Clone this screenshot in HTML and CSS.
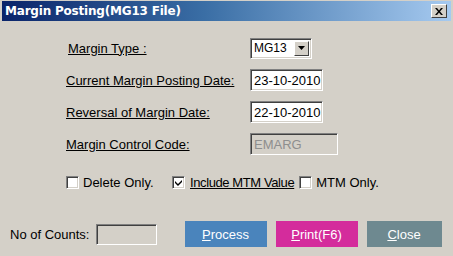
FILE: index.html
```html
<!DOCTYPE html>
<html lang="en">
<head>
    <meta charset="UTF-8">
    <title>Margin Posting(MG13 File)</title>
    <link rel="stylesheet" href="styles.css">
</head>
<body>
    <div class="window">
        <div class="titlebar">
            <span class="title">Margin Posting(MG13 File)</span>
            <div class="close-btn">
                <svg width="8" height="7" viewBox="0 0 8 7"><path d="M0 0h2l2 2.5L6 0h2L5 3.5 8 7H6L4 4.5 2 7H0l3-3.5z" fill="#000"/></svg>
            </div>
        </div>
        <div class="form">
            <label class="lbl lbl-first">Margin Type :</label>
            <div class="select">
                <span class="select-value">MG13</span>
                <span class="select-arrow">
                    <svg width="7" height="4" viewBox="0 0 7 4"><path d="M0 0h7L3.5 4z" fill="#000"/></svg>
                </span>
            </div>

            <label class="lbl">Current Margin Posting Date:</label>
            <div class="field date">23-10-2010</div>

            <label class="lbl">Reversal of Margin Date:</label>
            <div class="field date">22-10-2010</div>

            <label class="lbl">Margin Control Code:</label>
            <div class="field disabled">EMARG</div>
        </div>

        <div class="checks">
            <div class="check"><span class="box"></span><span>Delete Only.</span></div>
            <div class="check check-mtm"><span class="box">
                <svg width="7" height="7" viewBox="0 0 7 7"><path d="M0 2l3 3 4-4v2L3 7 0 4z" fill="#000"/></svg>
            </span><span class="u tight">Include MTM Value</span></div>
            <div class="check"><span class="box"></span><span>MTM Only.</span></div>
        </div>

        <div class="footer">
            <span class="count-lbl">No of Counts:</span>
            <div class="field count"></div>
            <div class="buttons">
                <div class="btn btn-process"><span class="u">P</span>rocess</div>
                <div class="btn btn-print"><span class="u">P</span>rint(F6)</div>
                <div class="btn btn-close"><span class="u">C</span>lose</div>
            </div>
        </div>
    </div>
</body>
</html>
```
FILE: styles.css
```css
:root {
    --face: #d4d0c8;
    --shadow: #808080;
    --dark: #404040;
    --text: #000000;
}
body {
    margin: 0;
    font-family: 'Liberation Sans', Arial, sans-serif;
    font-size: 13px;
    color: var(--text);
}
.window {
    width: 453px;
    height: 256px;
    background-color: var(--face);
    display: flex;
    flex-direction: column;
    overflow: hidden;
}
.titlebar {
    height: 20px;
    margin: 1px 2px 0 2px;
    background: linear-gradient(to right, #0a246a 0%, #3a6ea5 45%, #a6caf0 100%);
    display: flex;
    align-items: center;
    justify-content: space-between;
    padding: 0 4px 0 3px;
}
.title {
    color: #ffffff;
    font-weight: bold;
    font-size: 12px;
    font-family: 'DejaVu Sans', 'Liberation Sans', sans-serif;
    letter-spacing: -0.2px;
}
.close-btn {
    width: 14px;
    height: 12px;
    background-color: var(--face);
    border-top: 1px solid #ffffff;
    border-left: 1px solid #ffffff;
    border-right: 1px solid var(--dark);
    border-bottom: 1px solid var(--dark);
    display: flex;
    align-items: center;
    justify-content: center;
}
.form {
    display: grid;
    grid-template-columns: 184px auto;
    grid-auto-rows: 22px;
    row-gap: 10px;
    align-items: center;
    justify-items: start;
    padding: 16px 0 0 66px;
}
.lbl {
    text-decoration: underline;
    color: #000;
}
.lbl-first {
    padding-left: 2px;
}
.field {
    height: 22px;
    box-sizing: border-box;
    background-color: #ffffff;
    border-top: 1px solid var(--shadow);
    border-left: 1px solid var(--shadow);
    border-right: 1px solid #ffffff;
    border-bottom: 1px solid #ffffff;
    box-shadow: inset 1px 1px 0 var(--dark), inset -1px -1px 0 var(--face);
    display: flex;
    align-items: center;
    padding: 0 2px 0 3px;
    font-size: 13px;
    white-space: nowrap;
}
.date {
    width: 73px;
}
.disabled {
    width: 88px;
    background-color: var(--face);
    color: #8e8e8e;
}
.select {
    width: 62px;
    height: 21px;
    box-sizing: border-box;
    background-color: #ffffff;
    border-top: 1px solid var(--shadow);
    border-left: 1px solid var(--shadow);
    border-right: 1px solid #ffffff;
    border-bottom: 1px solid #ffffff;
    box-shadow: inset 1px 1px 0 var(--dark), inset -1px -1px 0 var(--face);
    display: flex;
    align-items: center;
    justify-content: space-between;
    padding: 2px 2px 2px 3px;
    font-size: 12px;
}
.select-arrow {
    width: 15px;
    height: 15px;
    box-sizing: border-box;
    background-color: var(--face);
    border-top: 1px solid #ffffff;
    border-left: 1px solid #ffffff;
    border-right: 1px solid var(--dark);
    border-bottom: 1px solid var(--dark);
    display: flex;
    align-items: center;
    justify-content: center;
}
.checks {
    display: grid;
    grid-template-columns: 106px auto auto;
    justify-content: start;
    align-items: center;
    padding: 20px 0 0 66px;
}
.check {
    display: flex;
    align-items: center;
    gap: 4px;
    white-space: nowrap;
}
.check-mtm {
    gap: 5px;
    margin-right: 5px;
}
.tight {
    letter-spacing: -0.4px;
}
.box {
    width: 13px;
    height: 13px;
    box-sizing: border-box;
    background-color: #ffffff;
    border-top: 1px solid var(--shadow);
    border-left: 1px solid var(--shadow);
    border-right: 1px solid #ffffff;
    border-bottom: 1px solid #ffffff;
    box-shadow: inset 1px 1px 0 var(--dark), inset -1px -1px 0 var(--face);
    display: flex;
    align-items: center;
    justify-content: center;
}
.u {
    text-decoration: underline;
}
.footer {
    display: flex;
    align-items: center;
    padding: 31px 0 0 10px;
}
.count-lbl {
    margin-right: 6px;
}
.count {
    width: 61px;
    height: 21px;
    background-color: var(--face);
}
.buttons {
    display: flex;
    gap: 9px;
    margin-left: 28px;
}
.btn {
    height: 26px;
    width: 82px;
    display: flex;
    align-items: center;
    justify-content: center;
    color: #ffffff;
    font-size: 13px;
}
.btn-process {
    background-color: #4a84bc;
}
.btn-print {
    background-color: #d42c9c;
}
.btn-close {
    width: 75px;
    background-color: #6e8990;
}
```
